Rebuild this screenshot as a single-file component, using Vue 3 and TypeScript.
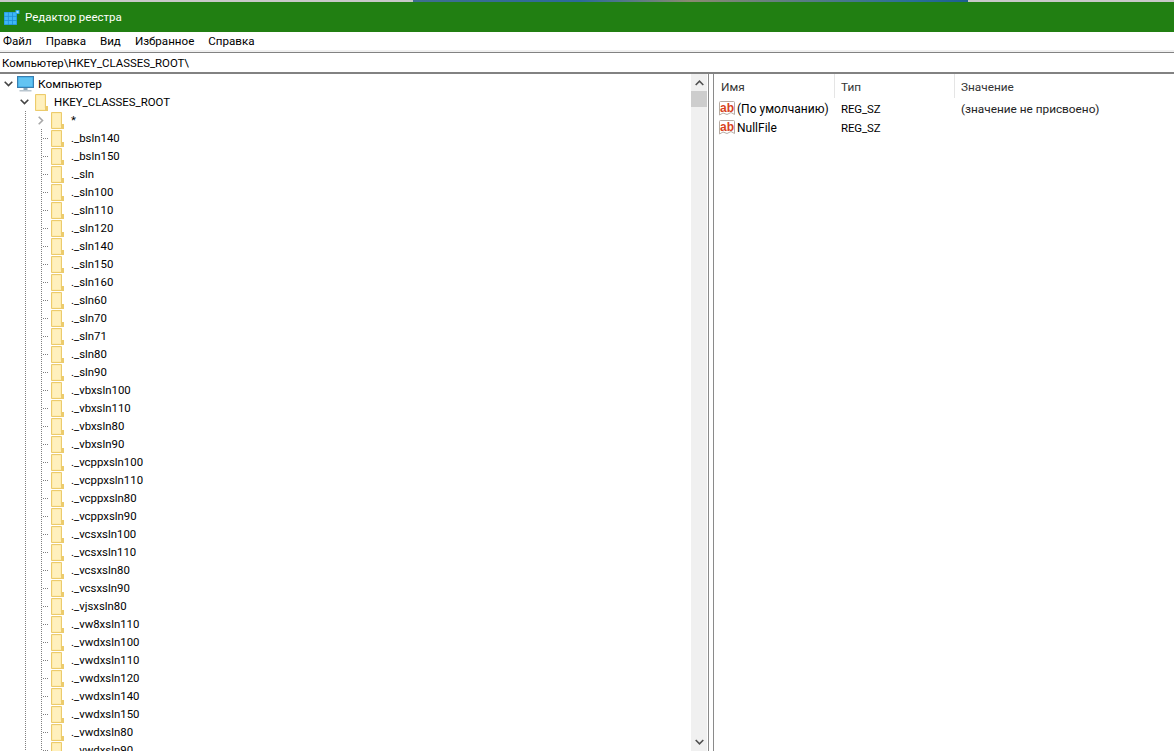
<script setup lang="ts">
const menus: string[] = ['Файл', 'Правка', 'Вид', 'Избранное', 'Справка']
const keys: string[] = [
  '._bsln140', '._bsln150', '._sln', '._sln100', '._sln110', '._sln120', '._sln140', '._sln150', '._sln160',
  '._sln60', '._sln70', '._sln71', '._sln80', '._sln90', '._vbxsln100', '._vbxsln110', '._vbxsln80', '._vbxsln90',
  '._vcppxsln100', '._vcppxsln110', '._vcppxsln80', '._vcppxsln90', '._vcsxsln100', '._vcsxsln110', '._vcsxsln80',
  '._vcsxsln90', '._vjsxsln80', '._vw8xsln110', '._vwdxsln100', '._vwdxsln110', '._vwdxsln120', '._vwdxsln140',
  '._vwdxsln150', '._vwdxsln80', '._vwdxsln90',
]
const values = [
  { name: '(По умолчанию)', type: 'REG_SZ', data: '(значение не присвоено)' },
  { name: 'NullFile', type: 'REG_SZ', data: '' },
]
const cells: number[] = [0, 1, 2, 3, 4, 5, 6, 7, 8]
</script>

<template>
  <div class="app">
    <div class="screen-strip"><div class="wall"></div></div>
    <header class="title">
      <svg class="title-icon" width="16" height="15" viewBox="0 0 16 15">
        <rect x="0" y="2" width="13" height="13" fill="#1f8fd8" />
        <rect v-for="c in cells" :key="c" :x="0.5 + (c % 3) * 4.2" :y="2.5 + Math.floor(c / 3) * 4.2" width="3.4" height="3.4" fill="#3fb8f5" />
        <rect x="11.5" y="0" width="4" height="4" fill="#2ba6e8" />
        <rect x="12.5" y="1" width="2" height="2" fill="#9fe0fb" />
      </svg>
      <span>Редактор реестра</span>
    </header>
    <nav class="menu">
      <span v-for="m in menus" :key="m">{{ m }}</span>
    </nav>
    <div class="address">Компьютер\HKEY_CLASSES_ROOT\</div>
    <main class="panes">
      <section class="tree">
        <div class="tree-rows">
          <div class="row root">
            <svg class="chev down" width="9" height="6" viewBox="0 0 9 6"><path d="M.7.7 4.5 4.5 8.3.7" /></svg>
            <svg class="pc" width="17" height="16" viewBox="0 0 17 16">
              <rect x="0.5" y="0.5" width="16" height="11" fill="#3aa5e0" stroke="#3a7fb0" />
              <rect x="1.5" y="1.5" width="14" height="9" fill="#62c4f2" />
              <rect x="6.5" y="12" width="4" height="2" fill="#8aa7b8" />
              <rect x="2.5" y="14" width="12" height="1.5" fill="#b9c6cf" />
            </svg>
            <span class="cyr">Компьютер</span>
          </div>
          <div class="row hive">
            <svg class="chev down" width="9" height="6" viewBox="0 0 9 6"><path d="M.7.7 4.5 4.5 8.3.7" /></svg>
            <svg class="folder" width="13" height="17" viewBox="0 0 13 17">
              <path d="M.5.5H10.5V13H12.5V16.5H.5Z" fill="#fde99f" stroke="#eccb6c" />
              <path d="M1.5 1.5H9.5V14H11.5V15.5H1.5Z" fill="#fff0bd" />
              <rect x="10" y="12" width="3" height="5" fill="#eccb6c" />
            </svg>
            <span>HKEY_CLASSES_ROOT</span>
          </div>
          <div class="row">
            <span class="guide-a"></span>
            <span class="slot">
              <svg class="chev right" width="6" height="9" viewBox="0 0 6 9"><path d="M.7.7 4.5 4.5.7 8.3" /></svg>
            </span>
            <svg class="folder" width="13" height="17" viewBox="0 0 13 17">
              <path d="M.5.5H10.5V13H12.5V16.5H.5Z" fill="#fde99f" stroke="#eccb6c" />
              <path d="M1.5 1.5H9.5V14H11.5V15.5H1.5Z" fill="#fff0bd" />
              <rect x="10" y="12" width="3" height="5" fill="#eccb6c" />
            </svg>
            <span>*</span>
          </div>
          <div v-for="k in keys" :key="k" class="row">
            <span class="guide-a"></span>
            <span class="guide-b"></span>
            <svg class="folder" width="13" height="17" viewBox="0 0 13 17">
              <path d="M.5.5H10.5V13H12.5V16.5H.5Z" fill="#fde99f" stroke="#eccb6c" />
              <path d="M1.5 1.5H9.5V14H11.5V15.5H1.5Z" fill="#fff0bd" />
              <rect x="10" y="12" width="3" height="5" fill="#eccb6c" />
            </svg>
            <span>{{ k }}</span>
          </div>
        </div>
        <div class="scroll">
          <svg width="9" height="6" viewBox="0 0 9 6"><path d="M.7 5 4.5 1.2 8.3 5" /></svg>
          <div class="thumb"></div>
          <div class="spacer"></div>
          <svg width="9" height="6" viewBox="0 0 9 6"><path d="M.7 1 4.5 4.8 8.3 1" /></svg>
        </div>
      </section>
      <div class="splitter"></div>
      <section class="list">
        <div class="list-head">
          <div class="col c1">Имя</div>
          <div class="col c2">Тип</div>
          <div class="col c3">Значение</div>
        </div>
        <div v-for="v in values" :key="v.name" class="list-row">
          <div class="c1 name">
            <svg class="ab" width="16" height="15" viewBox="0 0 16 15">
              <path d="M.5 1.5Q.5.5 1.5.5H14.5Q15.5.5 15.5 1.5V13.5L12 11.5 8 13.5 4 12 .5 14Z" fill="#fff" stroke="#b8aca4" />
              <text x="8" y="10.5" text-anchor="middle" class="ab-text">ab</text>
            </svg>
            <span class="val-name">{{ v.name }}</span>
          </div>
          <div class="c2">{{ v.type }}</div>
          <div class="c3 cyr">{{ v.data }}</div>
        </div>
      </section>
    </main>
  </div>
</template>

<style>
html, body { margin: 0; background: #fff; overflow: hidden; }
</style>

<style scoped>
.app {
  width: 1174px;
  height: 751px;
  display: flex;
  flex-direction: column;
  overflow: hidden;
  background: #fff;
  color: #000;
  font-family: Roboto, "Liberation Sans", sans-serif;
  font-size: 11.4px;
}
.cyr { font-size: 11.8px; }
.val-name { font-size: 12px; }
.screen-strip {
  height: 2px;
  flex: none;
  background: #c8c8c8;
  padding-left: 413px;
}
.wall {
  width: 555px;
  height: 2px;
  background: linear-gradient(90deg, #3f6f8f, #2c6a9a 30%, #8a8a70 50%, #2a6f98 90%, #1d5f8f);
}
.title {
  height: 30px;
  flex: none;
  background: #217f12;
  color: #fff;
  display: flex;
  align-items: center;
  padding-left: 4px;
  gap: 5px;
  font-size: 11.5px;
}
.menu {
  height: 18px;
  flex: none;
  display: flex;
  align-items: center;
  padding-left: 3px;
  gap: 14px;
  font-size: 11.6px;
  border-bottom: 2px solid #f0f0f0;
}
.address {
  height: 19px;
  flex: none;
  display: flex;
  align-items: center;
  padding-left: 2px;
  border-top: 1px solid #828282;
  border-bottom: 2px solid #828282;
}
.panes {
  flex: 1;
  min-height: 0;
  display: flex;
}
.tree {
  width: 707px;
  flex: none;
  display: flex;
  min-height: 0;
}
.tree-rows {
  flex: 1;
  min-width: 0;
  overflow: hidden;
  padding-top: 1px;
}
.row {
  height: 18px;
  display: flex;
  align-items: center;
  white-space: nowrap;
}
.root { padding-left: 4px; }
.pc { margin: 0 4px 0 4px; }
.hive { padding-left: 20px; }
.hive .folder { margin: 0 6px; }
.folder { flex: none; margin-right: 7px; }
.guide-a {
  width: 26px;
  align-self: stretch;
  flex: none;
  background: linear-gradient(#808080 50%, transparent 50%) 25px 0 / 1px 2px repeat-y;
}
.slot {
  width: 25px;
  flex: none;
  display: flex;
  align-items: center;
  padding-left: 12px;
  box-sizing: border-box;
}
.guide-b {
  width: 25px;
  flex: none;
  align-self: stretch;
  background:
    linear-gradient(#808080 50%, transparent 50%) 15px 0 / 1px 2px repeat-y,
    linear-gradient(90deg, #808080 50%, transparent 50%) 17px 9px / 2px 1px no-repeat,
    linear-gradient(90deg, #808080 50%, transparent 50%) 19px 9px / 2px 1px no-repeat,
    linear-gradient(90deg, #808080 50%, transparent 50%) 21px 9px / 2px 1px no-repeat;
}
.chev path, .scroll path {
  fill: none;
  stroke-width: 1.6;
}
.chev.down path { stroke: #444; }
.chev.right path { stroke: #a8a8a8; }
.scroll {
  width: 16px;
  flex: none;
  background: #f0f0f0;
  display: flex;
  flex-direction: column;
  align-items: center;
  padding: 6px 0;
  box-sizing: border-box;
}
.scroll path { stroke: #505050; }
.thumb {
  width: 16px;
  height: 16px;
  margin-top: 5px;
  background: #cdcdcd;
}
.spacer { flex: 1; }
.splitter {
  width: 6px;
  flex: none;
  box-sizing: border-box;
  margin-left: 1px;
  border-left: 1px solid #8a8a8a;
  border-right: 1px solid #8a8a8a;
}
.list {
  flex: 1;
  min-width: 0;
}
.list-head {
  display: flex;
  height: 25px;
  align-items: stretch;
}
.col {
  display: flex;
  align-items: center;
  box-sizing: border-box;
  padding-left: 7px;
  padding-top: 2px;
  color: #333;
  font-size: 11.8px;
  border-right: 1px solid #e5e5e5;
  margin-bottom: 1px;
}
.col.c2 { padding-left: 6px; }
.c1 { width: 121px; flex: none; }
.c2 { width: 120px; flex: none; }
.c3 { flex: 1; }
.col.c3 { border-right: 0; padding-left: 6px; }
.list-row {
  display: flex;
  align-items: center;
  height: 19px;
  color: #000;
}
.list-row .c2 { padding-left: 6px; box-sizing: border-box; letter-spacing: -0.1px; }
.list-row .c3 { padding-left: 6px; color: #222; }
.name {
  display: flex;
  align-items: center;
  padding-left: 5px;
  gap: 2px;
  box-sizing: border-box;
  white-space: nowrap;
}
.ab { flex: none; }
.ab-text {
  fill: #d8431f;
  font-size: 12px;
  font-weight: 700;
  font-family: "Liberation Sans", sans-serif;
}
</style>
